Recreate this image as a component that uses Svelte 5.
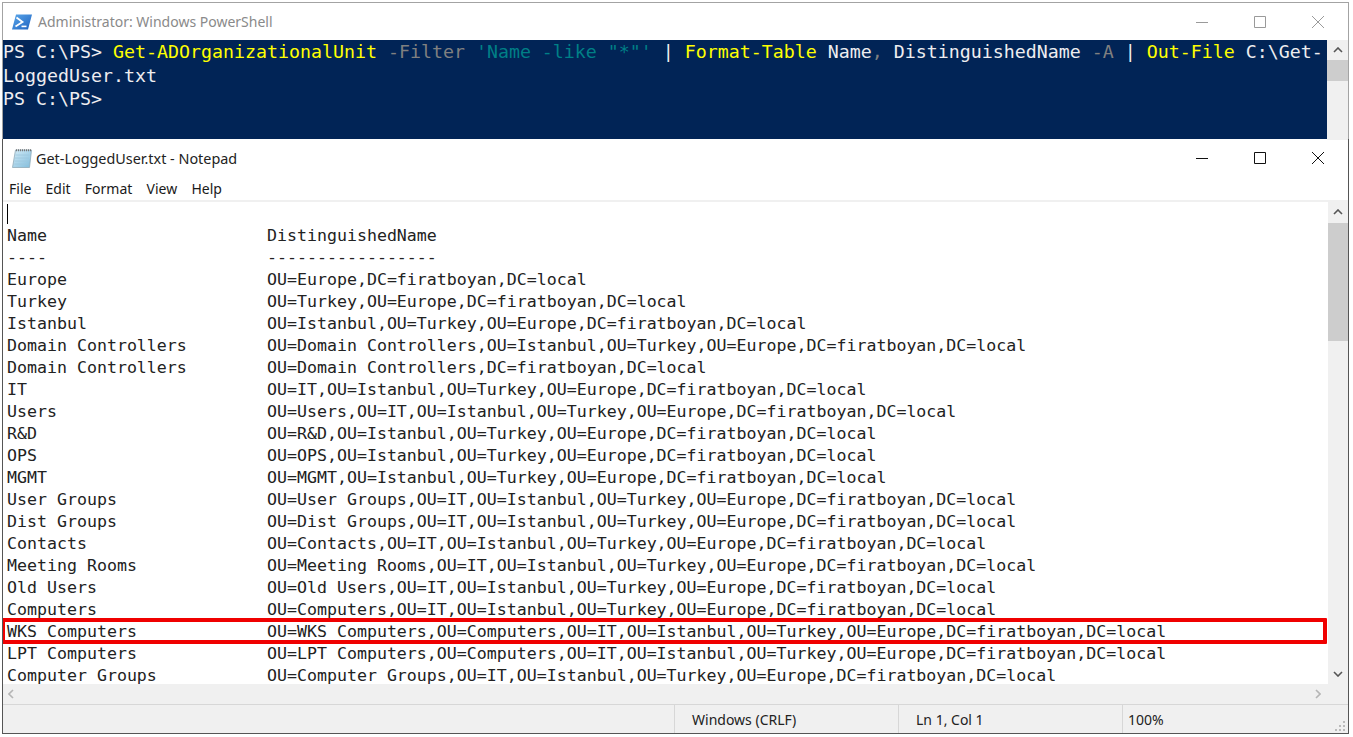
<script>
  const rows = [
    ['Name', 'DistinguishedName'],
    ['----', '-----------------'],
    ['Europe', 'OU=Europe,DC=firatboyan,DC=local'],
    ['Turkey', 'OU=Turkey,OU=Europe,DC=firatboyan,DC=local'],
    ['Istanbul', 'OU=Istanbul,OU=Turkey,OU=Europe,DC=firatboyan,DC=local'],
    ['Domain Controllers', 'OU=Domain Controllers,OU=Istanbul,OU=Turkey,OU=Europe,DC=firatboyan,DC=local'],
    ['Domain Controllers', 'OU=Domain Controllers,DC=firatboyan,DC=local'],
    ['IT', 'OU=IT,OU=Istanbul,OU=Turkey,OU=Europe,DC=firatboyan,DC=local'],
    ['Users', 'OU=Users,OU=IT,OU=Istanbul,OU=Turkey,OU=Europe,DC=firatboyan,DC=local'],
    ['R&D', 'OU=R&D,OU=Istanbul,OU=Turkey,OU=Europe,DC=firatboyan,DC=local'],
    ['OPS', 'OU=OPS,OU=Istanbul,OU=Turkey,OU=Europe,DC=firatboyan,DC=local'],
    ['MGMT', 'OU=MGMT,OU=Istanbul,OU=Turkey,OU=Europe,DC=firatboyan,DC=local'],
    ['User Groups', 'OU=User Groups,OU=IT,OU=Istanbul,OU=Turkey,OU=Europe,DC=firatboyan,DC=local'],
    ['Dist Groups', 'OU=Dist Groups,OU=IT,OU=Istanbul,OU=Turkey,OU=Europe,DC=firatboyan,DC=local'],
    ['Contacts', 'OU=Contacts,OU=IT,OU=Istanbul,OU=Turkey,OU=Europe,DC=firatboyan,DC=local'],
    ['Meeting Rooms', 'OU=Meeting Rooms,OU=IT,OU=Istanbul,OU=Turkey,OU=Europe,DC=firatboyan,DC=local'],
    ['Old Users', 'OU=Old Users,OU=IT,OU=Istanbul,OU=Turkey,OU=Europe,DC=firatboyan,DC=local'],
    ['Computers', 'OU=Computers,OU=IT,OU=Istanbul,OU=Turkey,OU=Europe,DC=firatboyan,DC=local'],
    ['WKS Computers', 'OU=WKS Computers,OU=Computers,OU=IT,OU=Istanbul,OU=Turkey,OU=Europe,DC=firatboyan,DC=local'],
    ['LPT Computers', 'OU=LPT Computers,OU=Computers,OU=IT,OU=Istanbul,OU=Turkey,OU=Europe,DC=firatboyan,DC=local'],
    ['Computer Groups', 'OU=Computer Groups,OU=IT,OU=Istanbul,OU=Turkey,OU=Europe,DC=firatboyan,DC=local']
  ];
  const menu = ['File', 'Edit', 'Format', 'View', 'Help'];
</script>

<div class="screen">
  <section class="win ps">
    <header class="title ps-title">
      <svg class="ps-icon" width="20" height="16" viewBox="0 0 20 16">
        <defs>
          <linearGradient id="psblue" x1="0" y1="0" x2="1" y2="1">
            <stop offset="0" stop-color="#5aa7ea" />
            <stop offset="1" stop-color="#1f62c0" />
          </linearGradient>
        </defs>
        <path d="M4 0.5 H20 L16 15.5 H0 Z" fill="url(#psblue)" />
        <path d="M4.5 3.5 L10.5 8 L3.5 12.5" fill="none" stroke="#fff" stroke-width="1.8" />
        <path d="M9.5 12.4 H14.5" stroke="#fff" stroke-width="1.6" />
      </svg>
      <span class="title-text">Administrator: Windows PowerShell</span>
      <div class="controls dim">
        <svg width="12" height="12" viewBox="0 0 12 12"><path d="M0 6.5 H12" /></svg>
        <svg width="12" height="12" viewBox="0 0 12 12"><path d="M0.5 0.5 H11.5 V11.5 H0.5 Z" /></svg>
        <svg width="12" height="12" viewBox="0 0 12 12"><path d="M0 0 L12 12 M12 0 L0 12" /></svg>
      </div>
    </header>
    <div class="console-wrap">
      <pre class="console">PS C:\PS&gt; <span class="y">Get-ADOrganizationalUnit</span> <span class="g">-Filter</span> <span class="c">'Name -like "*"'</span> | <span class="y">Format-Table</span> Name<span class="g">,</span> DistinguishedName <span class="g">-A</span> | <span class="y">Out-File</span> C:\Get-
LoggedUser.txt
PS C:\PS&gt;</pre>
      <div class="vbar console-bar">
        <div class="arrow up"><svg width="10" height="6" viewBox="0 0 10 6"><path d="M1 5 L5 1 L9 5" /></svg></div>
        <div class="thumb small"></div>
      </div>
    </div>
  </section>

  <section class="win np">
    <header class="title np-title">
      <svg class="np-icon" width="20" height="20" viewBox="0 0 20 20">
        <defs>
          <linearGradient id="pad" x1="0" y1="0" x2="1" y2="1">
            <stop offset="0" stop-color="#d5ecf7" />
            <stop offset="1" stop-color="#7fbcdc" />
          </linearGradient>
        </defs>
        <path d="M3.5 2 H19.5 L17.5 19.5 H0.5 Z" fill="url(#pad)" stroke="#8fa9b8" stroke-width="0.8" />
        <path d="M3.5 7 H17.5 M3 10 H17 M2.7 13 H16.7 M2.4 16 H16.4" stroke="#9cc7dd" stroke-width="0.8" />
        <path d="M4 2.2 H19" stroke="#777" stroke-width="2" stroke-dasharray="1 1" />
      </svg>
      <span class="np-name">Get-LoggedUser.txt - Notepad</span>
      <div class="controls">
        <svg width="12" height="12" viewBox="0 0 12 12"><path d="M0 6.5 H12" /></svg>
        <svg width="12" height="12" viewBox="0 0 12 12"><path d="M0.5 0.5 H11.5 V11.5 H0.5 Z" /></svg>
        <svg width="12" height="12" viewBox="0 0 12 12"><path d="M0 0 L12 12 M12 0 L0 12" /></svg>
      </div>
    </header>

    <nav class="menu">
      {#each menu as item}
        <span>{item}</span>
      {/each}
    </nav>

    <div class="body">
      <div class="text">
        <div class="row"><i class="caret"></i></div>
        {#each rows as row}
          <div class="row" class:hl={row[0] === 'WKS Computers'}>
            <span class="col">{row[0]}</span><span>{row[1]}</span>
          </div>
        {/each}
      </div>
      <div class="vbar">
        <div class="arrow up"><svg width="10" height="6" viewBox="0 0 10 6"><path d="M1 5 L5 1 L9 5" /></svg></div>
        <div class="thumb"></div>
        <div class="arrow down"><svg width="10" height="6" viewBox="0 0 10 6"><path d="M1 1 L5 5 L9 1" /></svg></div>
      </div>
    </div>

    <div class="hbar">
      <svg width="6" height="10" viewBox="0 0 6 10"><path d="M5 1 L1 5 L5 9" /></svg>
      <svg width="6" height="10" viewBox="0 0 6 10"><path d="M1 1 L5 5 L1 9" /></svg>
    </div>

    <footer class="status">
      <span class="cell crlf">Windows (CRLF)</span>
      <span class="cell pos">Ln 1, Col 1</span>
      <span class="cell zoom">100%</span>
      <svg class="grip" width="12" height="12" viewBox="0 0 12 12">
        <path d="M9 1h2v2H9zM5 5h2v2H5zM9 5h2v2H9zM1 9h2v2H1zM5 9h2v2H5zM9 9h2v2H9z" fill="#bbb" />
      </svg>
    </footer>
  </section>
</div>

<style>
  :global(body) {
    background: #fff;
  }

  .screen {
    width: 1347px;
    height: 732px;
    padding: 2px 0 0 2px;
    overflow: hidden;
  }

  .win {
    width: 1347px;
    box-sizing: border-box;
    border: 1px solid #a3a3a3;
    background: #fff;
    font-family: "Noto Sans", "Open Sans", sans-serif;
  }

  .ps {
    height: 137px;
    border-bottom: 0;
  }

  .np {
    height: 595px;
    border: 1px solid #555;
    border-top: 0;
    display: flex;
    flex-direction: column;
  }

  .title {
    display: flex;
    align-items: center;
  }

  .ps-title {
    height: 37px;
    padding-left: 9px;
  }

  .ps-icon {
    margin-right: 6px;
  }

  .title-text {
    font-size: 14px;
    color: #8a8a8a;
  }

  .controls {
    margin-left: auto;
    display: flex;
    gap: 46px;
    padding-right: 24px;
  }

  .controls path {
    fill: none;
    stroke: #111;
    stroke-width: 1;
  }

  .dim path {
    stroke: #9a9a9a;
  }

  .console-wrap {
    display: flex;
    height: 100px;
    background: #012456;
  }

  .console {
    flex: 1;
    margin: 0;
    padding: 0;
    font-family: "DejaVu Sans Mono", monospace;
    font-size: 18.27px;
    line-height: 23.5px;
    color: #eeedf0;
    overflow: hidden;
    white-space: pre;
  }

  .y { color: #ffff00; }
  .g { color: #808080; }
  .c { color: #007f86; }

  .np-title {
    height: 38px;
    padding-left: 9px;
  }

  .np-icon {
    margin-right: 4px;
  }

  .np-name {
    font-size: 14.4px;
    color: #222;
  }

  .menu {
    height: 23px;
    padding: 0 0 1px 6px;
    box-sizing: border-box;
    display: flex;
    gap: 14.2px;
    align-items: center;
    font-size: 14px;
    color: #1a1a1a;
  }

  .body {
    flex: none;
    height: 484px;
    display: flex;
    border-top: 2px solid #f0f0f0;
    box-sizing: border-box;
  }

  .text {
    flex: 1;
    min-width: 0;
    overflow: hidden;
    padding-top: 1px;
    font-family: "DejaVu Sans Mono", monospace;
    font-size: 16.6px;
    line-height: 22px;
    color: #222;
  }

  .row {
    position: relative;
    height: 22px;
    padding-left: 4px;
    display: flex;
    white-space: pre;
  }

  .col {
    width: 260px;
  }

  .caret {
    width: 1px;
    height: 20px;
    margin-top: 1px;
    background: #000;
  }

  .hl::after {
    content: "";
    position: absolute;
    left: -2px;
    right: 1px;
    top: -3px;
    bottom: -1px;
    border: 4px solid #f00000;
    border-radius: 1px;
  }

  .vbar {
    width: 20px;
    flex: none;
    background: #f0f0f0;
    display: flex;
    flex-direction: column;
  }

  .console-bar {
    width: 21px;
  }

  .arrow {
    height: 20px;
    display: flex;
    align-items: center;
    justify-content: center;
    flex: none;
  }

  .down {
    margin-top: auto;
  }

  .arrow path,
  .hbar path {
    fill: none;
    stroke: #555;
    stroke-width: 1.6;
  }

  .thumb {
    height: 118px;
    margin-top: 1px;
    background: #cdcdcd;
  }

  .thumb.small {
    height: 21px;
    margin-top: 0;
  }

  .hbar {
    height: 20px;
    background: #f0f0f0;
    display: flex;
    justify-content: space-between;
    align-items: center;
    padding: 0 27px 0 5px;
  }

  .hbar path {
    stroke: #b5b5b5;
  }

  .status {
    flex: 1;
    display: flex;
    align-items: center;
    background: #f0f0f0;
    border-top: 1px solid #d7d7d7;
    font-size: 14px;
    color: #222;
    position: relative;
  }

  .cell {
    height: 100%;
    display: flex;
    align-items: center;
    box-sizing: border-box;
    border-left: 1px solid #d7d7d7;
    padding-left: 17px;
  }

  .crlf {
    margin-left: 671px;
    width: 224px;
  }

  .pos {
    width: 224px;
  }

  .zoom {
    padding-left: 5px;
    flex: 1;
  }

  .grip {
    position: absolute;
    right: 2px;
    bottom: 1px;
  }
</style>
